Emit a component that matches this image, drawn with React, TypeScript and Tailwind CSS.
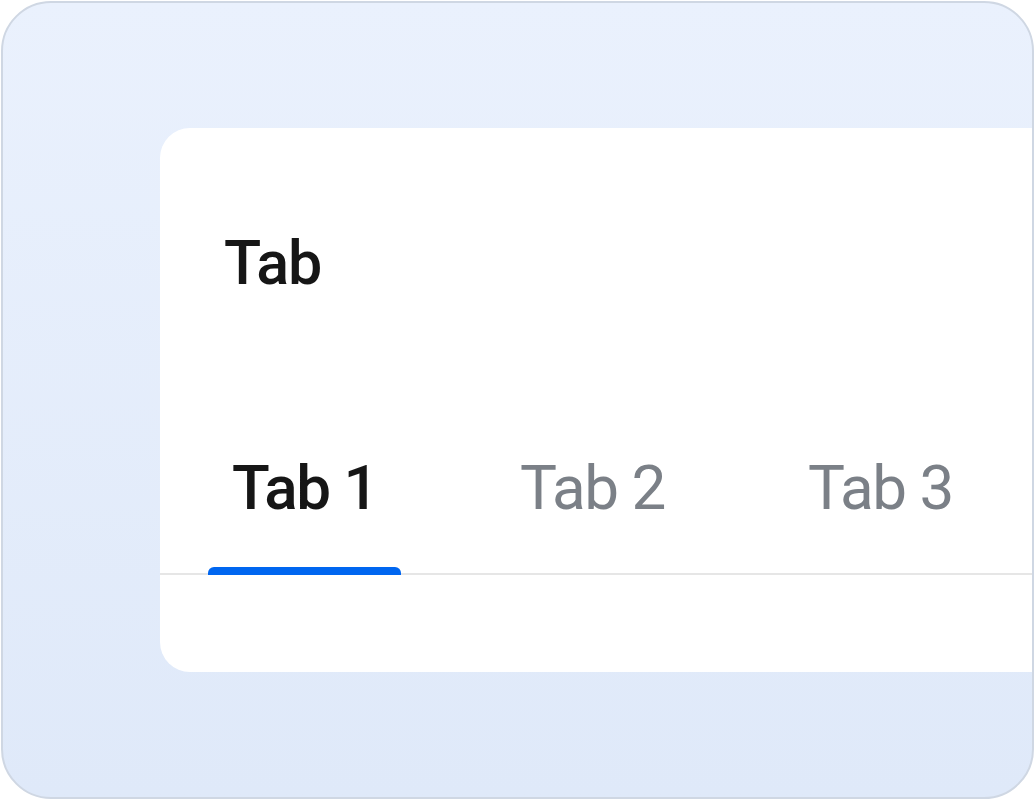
import React from 'react';

const tabs = ['Tab 1', 'Tab 2', 'Tab 3'];

export default function App() {
  const active = 0;

  return (
    <div className="w-[1035px] h-[800px] bg-white p-px" style={{ fontFamily: 'Roboto, "Noto Sans", sans-serif' }}>
      {/* Cadre extérieur */}
      <div className="w-[1033px] h-[798px] rounded-[50px] border-2 border-[#cfd7e3] bg-gradient-to-b from-[#eaf1fd] to-[#dfe9f9] overflow-hidden pt-[125px] pl-[157px]">
        {/* Carte */}
        <div className="w-[1000px] h-[544px] bg-white rounded-[30px] flex flex-col">
          <div className="pl-[64px] pt-[97px] h-[286px]">
            <h1 className="text-[61px] leading-[76px] font-medium text-[#161616] tracking-[-1px]">Tab</h1>
          </div>
          <div className="flex pl-[48px] border-b-2 border-[#e6e6e6] h-[161px] pt-[34px]">
            {tabs.map((t, i) => (
              <div key={t} className="w-[288px] flex items-start">
                <div className="flex flex-col items-stretch">
                  <span
                    className={`px-6 text-[62px] leading-[80px] whitespace-nowrap ${
                      i === active
                        ? 'font-medium text-[#161616] tracking-[-1.5px]'
                        : 'font-normal text-[#7b8087] tracking-[-1.5px]'
                    }`}
                  >
                    {t}
                  </span>
                  {i === active && <div className="h-[8px] mt-[39px] bg-[#0066f0] rounded-t-[6px] -mb-[2px]" />}
                </div>
              </div>
            ))}
          </div>
        </div>
      </div>
    </div>
  );
}
